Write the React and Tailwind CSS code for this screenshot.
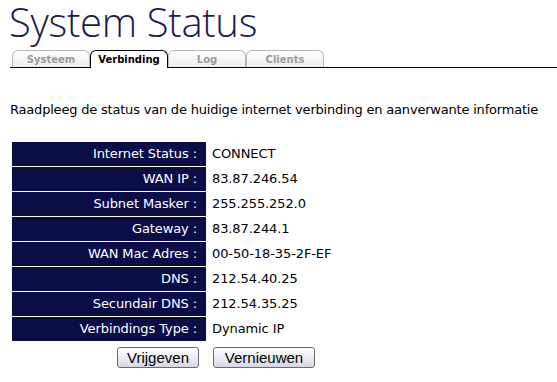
import React from "react";

const rows = [
  ["Internet Status :", "CONNECT"],
  ["WAN IP :", "83.87.246.54"],
  ["Subnet Masker :", "255.255.252.0"],
  ["Gateway :", "83.87.244.1"],
  ["WAN Mac Adres :", "00-50-18-35-2F-EF"],
  ["DNS :", "212.54.40.25"],
  ["Secundair DNS :", "212.54.35.25"],
  ["Verbindings Type :", "Dynamic IP"],
];

const tabs = [
  { label: "Systeem", active: false },
  { label: "Verbinding", active: true },
  { label: "Log", active: false },
  { label: "Clients", active: false },
];

const App = () => {
  const btn =
    "h-[21px] rounded-[3px] border border-[#6b6b6b] bg-gradient-to-b from-white to-[#d8d8e4] text-[15px] text-black font-['Liberation_Sans',Arial,sans-serif] leading-none";

  return (
    <div className="w-[557px] h-[382px] bg-white overflow-hidden font-['DejaVu_Sans',Verdana,sans-serif]">
      {/* Title */}
      <div className="h-[48px] flex items-start">
        <h1 className="pl-[9px] text-[40px] leading-[56px] -mt-[6px] font-light tracking-[-0.3px] text-[#1b1b4d] font-['Open_Sans',sans-serif]">
          System Status
        </h1>
      </div>

      {/* Tabs */}
      <div className="ml-[10px] flex items-end h-[20px] border-b border-black pl-[2px]">
        {tabs.map((t) => (
          <div
            key={t.label}
            className={
              t.active
                ? "w-[78px] h-[18px] -mb-px rounded-t-[6px] border border-b-0 border-black bg-white text-black text-[10px] font-bold flex items-center justify-center"
                : "w-[78px] h-[17px] rounded-t-[6px] border border-b-0 border-[#b8b8b8] bg-gradient-to-b from-white to-[#ececec] text-[#9a9a9a] text-[10px] font-bold flex items-center justify-center"
            }
          >
            {t.label}
          </div>
        ))}
      </div>

      {/* Intro */}
      <p className="mt-[32px] pl-[10px] text-[13px] tracking-[-0.2px] text-black">
        Raadpleeg de status van de huidige internet verbinding en aanverwante informatie
      </p>

      {/* Table */}
      <div className="mt-[22px] ml-[12px] flex flex-col gap-px">
        {rows.map(([label, value]) => (
          <div key={label} className="flex h-[24px] items-center">
            <div className="w-[194px] h-full bg-[#0b0d47] text-white text-[13px] tracking-[-0.1px] flex items-center justify-end pr-[9px]">
              {label}
            </div>
            <div className="pl-[6px] text-[13px] tracking-[-0.1px] text-black">{value}</div>
          </div>
        ))}
      </div>

      {/* Buttons */}
      <div className="mt-[6px] flex gap-[14px] pl-[117px]">
        <button className={`${btn} w-[82px]`}>Vrijgeven</button>
        <button className={`${btn} w-[102px]`}>Vernieuwen</button>
      </div>
    </div>
  );
};

export default App;
